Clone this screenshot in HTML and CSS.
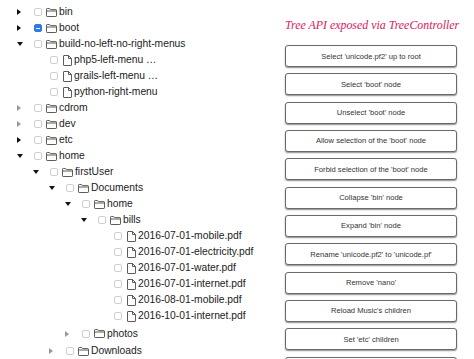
FILE: index.html
```html
<!DOCTYPE html>
<html>
<head>
<meta charset="utf-8">
<link rel="stylesheet" href="styles.css">
</head>
<body>
<svg class="defs" width="0" height="0" aria-hidden="true">
  <symbol id="i-folder" viewBox="0 0 11 9">
    <path d="M0.5 1.2 Q0.5 0.5 1.2 0.5 H3.6 L4.6 1.6 H9.8 Q10.5 1.6 10.5 2.3 V7.8 Q10.5 8.5 9.8 8.5 H1.2 Q0.5 8.5 0.5 7.8 Z M0.5 3 H10.5" fill="none" stroke="#4a4a4a" stroke-width="0.9"/>
  </symbol>
  <symbol id="i-file" viewBox="0 0 9 11">
    <path d="M0.5 1 Q0.5 0.5 1 0.5 H5.5 L8.5 3.5 V10 Q8.5 10.5 8 10.5 H1 Q0.5 10.5 0.5 10 Z M5.5 0.5 V3.5 H8.5" fill="none" stroke="#4a4a4a" stroke-width="0.9"/>
  </symbol>
</svg>
<div class="page">
  <div class="tree-pane">
    <ul class="tree root">
      <li><div class="row"><span class="tog right dark"></span><span class="cb"></span><svg class="ico folder"><use href="#i-folder"/></svg><span class="name">bin</span></div></li>
      <li><div class="row"><span class="tog right dark"></span><span class="cb partial"></span><svg class="ico folder"><use href="#i-folder"/></svg><span class="name">boot</span></div></li>
      <li><div class="row"><span class="tog down dark"></span><span class="cb"></span><svg class="ico folder"><use href="#i-folder"/></svg><span class="name">build-no-left-no-right-menus</span></div>
        <ul class="tree">
          <li><div class="row"><span class="tog"></span><span class="cb"></span><svg class="ico file"><use href="#i-file"/></svg><span class="name">php5-left-menu …</span></div></li>
          <li><div class="row"><span class="tog"></span><span class="cb"></span><svg class="ico file"><use href="#i-file"/></svg><span class="name">grails-left-menu …</span></div></li>
          <li><div class="row"><span class="tog"></span><span class="cb"></span><svg class="ico file"><use href="#i-file"/></svg><span class="name">python-right-menu</span></div></li>
        </ul>
      </li>
      <li><div class="row"><span class="tog right light"></span><span class="cb"></span><svg class="ico folder"><use href="#i-folder"/></svg><span class="name">cdrom</span></div></li>
      <li><div class="row"><span class="tog right light"></span><span class="cb"></span><svg class="ico folder"><use href="#i-folder"/></svg><span class="name">dev</span></div></li>
      <li><div class="row"><span class="tog right dark"></span><span class="cb"></span><svg class="ico folder"><use href="#i-folder"/></svg><span class="name">etc</span></div></li>
      <li><div class="row"><span class="tog down dark"></span><span class="cb"></span><svg class="ico folder"><use href="#i-folder"/></svg><span class="name">home</span></div>
        <ul class="tree">
          <li><div class="row"><span class="tog down dark"></span><span class="cb"></span><svg class="ico folder"><use href="#i-folder"/></svg><span class="name">firstUser</span></div>
            <ul class="tree">
              <li><div class="row"><span class="tog down dark"></span><span class="cb"></span><svg class="ico folder"><use href="#i-folder"/></svg><span class="name">Documents</span></div>
                <ul class="tree">
                  <li><div class="row"><span class="tog down dark"></span><span class="cb"></span><svg class="ico folder"><use href="#i-folder"/></svg><span class="name">home</span></div>
                    <ul class="tree">
                      <li><div class="row"><span class="tog down dark"></span><span class="cb"></span><svg class="ico folder"><use href="#i-folder"/></svg><span class="name">bills</span></div>
                        <ul class="tree">
                          <li><div class="row"><span class="tog"></span><span class="cb"></span><svg class="ico file"><use href="#i-file"/></svg><span class="name">2016-07-01-mobile.pdf</span></div></li>
                          <li><div class="row"><span class="tog"></span><span class="cb"></span><svg class="ico file"><use href="#i-file"/></svg><span class="name">2016-07-01-electricity.pdf</span></div></li>
                          <li><div class="row"><span class="tog"></span><span class="cb"></span><svg class="ico file"><use href="#i-file"/></svg><span class="name">2016-07-01-water.pdf</span></div></li>
                          <li><div class="row"><span class="tog"></span><span class="cb"></span><svg class="ico file"><use href="#i-file"/></svg><span class="name">2016-07-01-internet.pdf</span></div></li>
                          <li><div class="row"><span class="tog"></span><span class="cb"></span><svg class="ico file"><use href="#i-file"/></svg><span class="name">2016-08-01-mobile.pdf</span></div></li>
                          <li><div class="row"><span class="tog"></span><span class="cb"></span><svg class="ico file"><use href="#i-file"/></svg><span class="name">2016-10-01-internet.pdf</span></div></li>
                        </ul>
                      </li>
                    </ul>
                  </li>
                  <li><div class="row row-gap"><span class="tog right light"></span><span class="cb"></span><svg class="ico folder"><use href="#i-folder"/></svg><span class="name">photos</span></div></li>
                </ul>
              </li>
              <li><div class="row row-gap"><span class="tog right light"></span><span class="cb"></span><svg class="ico folder"><use href="#i-folder"/></svg><span class="name">Downloads</span></div></li>
            </ul>
          </li>
        </ul>
      </li>
    </ul>
  </div>
  <div class="api-pane">
    <h1 class="title">Tree API exposed via TreeController</h1>
    <div class="buttons">
      <button class="btn">Select 'unicode.pf2' up to root</button>
      <button class="btn">Select 'boot' node</button>
      <button class="btn">Unselect 'boot' node</button>
      <button class="btn">Allow selection of the 'boot' node</button>
      <button class="btn">Forbid selection of the 'boot' node</button>
      <button class="btn">Collapse 'bin' node</button>
      <button class="btn">Expand 'bin' node</button>
      <button class="btn">Rename 'unicode.pf2' to 'unicode.pf'</button>
      <button class="btn">Remove 'nano'</button>
      <button class="btn">Reload Music's children</button>
      <button class="btn">Set 'etc' children</button>
      <button class="btn" aria-label="more"></button>
    </div>
  </div>
</div>
</body>
</html>
```

FILE: styles.css
```css
html, body {
  margin: 0;
  padding: 0;
  background: #ffffff;
  overflow: hidden;
}
.defs {
  position: absolute;
  width: 0;
  height: 0;
}
.page {
  display: flex;
  width: 474px;
  height: 359px;
  font-family: "Liberation Sans", Arial, sans-serif;
  color: #222;
}
.tree-pane {
  width: 285px;
  padding-top: 4px;
}
.tree {
  list-style: none;
  margin: 0;
  padding: 0 0 0 16px;
}
.row {
  display: flex;
  align-items: center;
  height: 16px;
  font-size: 10.3px;
  white-space: nowrap;
}
.row-gap {
  margin-top: 1.5px;
}
.tog {
  width: 18px;
  height: 16px;
  flex: none;
  position: relative;
}
.tog.right::after {
  content: "";
  position: absolute;
  left: 1px;
  top: 5px;
  border-top: 3px solid transparent;
  border-bottom: 3px solid transparent;
  border-left: 4px solid #111;
}
.tog.down::after {
  content: "";
  position: absolute;
  left: 1px;
  top: 6px;
  border-left: 3px solid transparent;
  border-right: 3px solid transparent;
  border-top: 4px solid #111;
}
.tog.right.light::after {
  border-left-color: #999;
}
.cb {
  width: 6px;
  height: 6px;
  border: 1px solid #cfcfcf;
  border-radius: 2px;
  background: #fff;
  flex: none;
  margin-right: 4px;
  position: relative;
}
.cb.partial {
  background: #2f7ae5;
  border-color: #2f7ae5;
}
.cb.partial::after {
  content: "";
  position: absolute;
  left: 1px;
  right: 1px;
  top: 2.5px;
  height: 1px;
  background: #fff;
}
.ico {
  flex: none;
  margin-right: 2px;
}
.folder {
  width: 11px;
  height: 9px;
}
.file {
  width: 9px;
  height: 11px;
  margin-left: 1px;
  margin-right: 2px;
}
.name {
  line-height: 16px;
}
.api-pane {
  width: 172px;
  display: flex;
  flex-direction: column;
}
.title {
  margin: 17px 0 12px;
  font-family: "Liberation Serif", "Times New Roman", serif;
  font-style: italic;
  font-weight: normal;
  font-size: 11.9px;
  line-height: 16px;
  color: #d9185f;
  text-align: center;
  white-space: nowrap;
}
.buttons {
  display: flex;
  flex-direction: column;
  gap: 6.33px;
}
.btn {
  height: 22px;
  width: 172px;
  margin: 0;
  padding: 0;
  box-sizing: border-box;
  border: 1px solid #6a6a6a;
  border-radius: 3px;
  background: #fff;
  box-shadow: 0 1px 1.5px rgba(0, 0, 0, 0.45);
  font-family: "Liberation Sans", Arial, sans-serif;
  font-size: 7.6px;
  color: #333;
  text-align: center;
  flex: none;
}
```
